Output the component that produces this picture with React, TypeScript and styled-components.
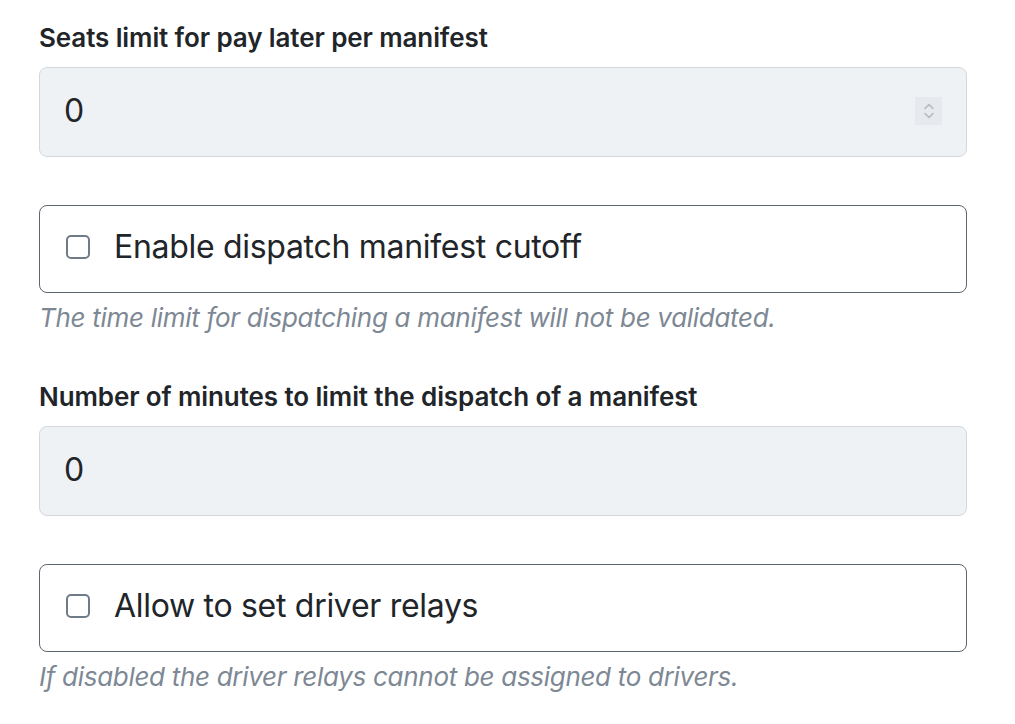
import React, { useState } from 'react'
import styled, { createGlobalStyle } from 'styled-components'

const GlobalStyle = createGlobalStyle`
  body {
    margin: 0;
    background: #ffffff;
    font-family: Inter, "Noto Sans", sans-serif;
    color: #212529;
  }
`

const Page = styled.div`
  width: 928px;
  padding: 22px 0 0 39px;
  display: flex;
  flex-direction: column;
`

const Field = styled.div<{ gap: number }>`
  display: flex;
  flex-direction: column;
  margin-bottom: ${(p) => p.gap}px;
`

const Label = styled.label`
  font-size: 26px;
  font-weight: 600;
  line-height: 32px;
  color: #212529;
  margin-bottom: 13px;
  letter-spacing: -0.1px;
`

const InputWrap = styled.div`
  position: relative;
  height: 90px;
  box-sizing: border-box;
  border: 1px solid #d3d8de;
  border-radius: 8px;
  background: #eff2f5;
  display: flex;
  align-items: center;
  padding: 0 24px 4px;
`

const Value = styled.input`
  flex: 1;
  border: none;
  background: transparent;
  font-family: inherit;
  font-size: 32px;
  color: #212529;
  outline: none;
  padding: 0;
  &::-webkit-outer-spin-button,
  &::-webkit-inner-spin-button {
    -webkit-appearance: none;
    margin: 0;
  }
`

const Spinner = styled.div`
  position: absolute;
  right: 24px;
  top: 29px;
  width: 27px;
  height: 28px;
  background: #e6e9ed;
  display: flex;
  align-items: center;
  justify-content: center;
`

const CheckBox = styled.label`
  height: 88px;
  box-sizing: border-box;
  border: 1px solid #5c6670;
  border-radius: 8px;
  display: flex;
  align-items: center;
  gap: 24px;
  padding: 0 26px 5px;
  cursor: pointer;
`

const Box = styled.span`
  width: 24px;
  height: 24px;
  box-sizing: border-box;
  border: 2px solid #6f7b88;
  border-radius: 5px;
  background: #ffffff;
`

const CheckText = styled.span`
  font-size: 32px;
  color: #212529;
  letter-spacing: -0.3px;
`

const Help = styled.div`
  font-size: 26px;
  font-style: italic;
  color: #7d8894;
  margin-top: 8px;
  line-height: 34px;
  letter-spacing: -0.3px;
`

const NumberField = ({ label, gap, spinner }: { label: string; gap: number; spinner?: boolean }) => {
  const [val, setVal] = useState('0')
  return (
    <Field gap={gap}>
      <Label>{label}</Label>
      <InputWrap>
        <Value type="number" value={val} onChange={(e) => setVal(e.target.value)} />
        {spinner && (
          <Spinner>
            <svg width="12" height="20" viewBox="0 0 12 20" fill="none" stroke="#b4bac2" strokeWidth="1.6" strokeLinecap="round" strokeLinejoin="round">
              <path d="M2 7.5 6 3.5 10 7.5" />
              <path d="M2 12.5 6 16.5 10 12.5" />
            </svg>
          </Spinner>
        )}
      </InputWrap>
    </Field>
  )
}

const CheckField = ({ label, help, gap }: { label: string; help: string; gap: number }) => (
  <Field gap={gap}>
    <CheckBox>
      <Box />
      <CheckText>{label}</CheckText>
    </CheckBox>
    <Help>{help}</Help>
  </Field>
)

const App = () => (
  <>
    <GlobalStyle />
    <Page>
      <NumberField label="Seats limit for pay later per manifest" gap={48} spinner />
      <CheckField
        label="Enable dispatch manifest cutoff"
        help="The time limit for dispatching a manifest will not be validated."
        gap={46}
      />
      <NumberField label="Number of minutes to limit the dispatch of a manifest" gap={48} />
      <CheckField
        label="Allow to set driver relays"
        help="If disabled the driver relays cannot be assigned to drivers."
        gap={0}
      />
    </Page>
  </>
)

export default App
